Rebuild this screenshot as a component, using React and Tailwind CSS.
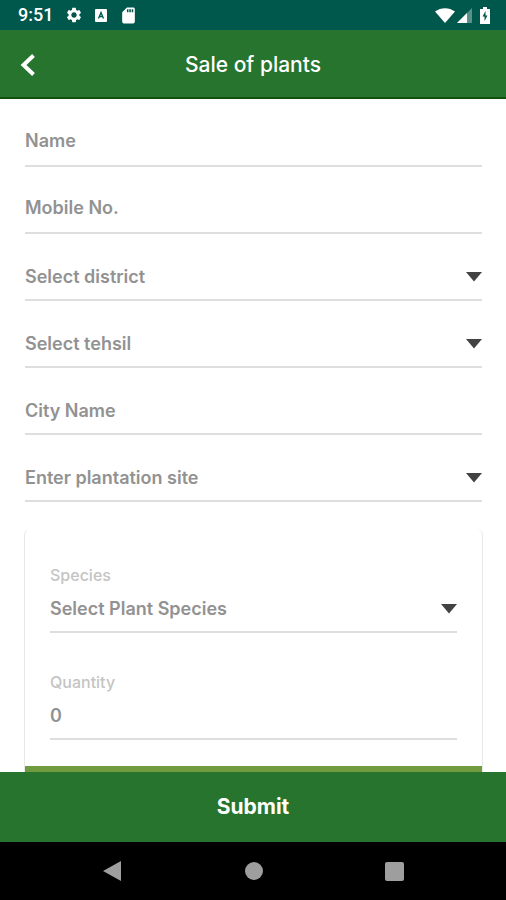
import React from 'react'
import { MdSettings, MdSdStorage } from 'react-icons/md'

const fields = [
  { id: 'name', label: 'Name', type: 'text', pad: 'pb-3' },
  { id: 'mobile', label: 'Mobile No.', type: 'tel', pad: 'pb-3' },
  { id: 'district', label: 'Select district', type: 'select', pad: 'pb-2.5' },
  { id: 'tehsil', label: 'Select tehsil', type: 'select', pad: 'pb-2.5' },
  { id: 'city', label: 'City Name', type: 'text', pad: 'pb-2.5' },
  { id: 'site', label: 'Enter plantation site', type: 'select', pad: 'pb-2.5' },
]

function StatusBar() {
  return (
    <div className="flex h-[30px] shrink-0 items-center justify-between bg-[#00574b] pl-[18px] pr-4 text-white">
      <div className="flex items-center">
        <span className="w-[47px] font-[Roboto,sans-serif] text-[18px] leading-6 font-medium">9:51</span>
        <MdSettings className="h-[18px] w-[18px]" />
        <svg viewBox="0 0 12 13" className="ml-3 h-[13px] w-3">
          <rect width="12" height="13" rx="1" fill="#fff" />
          <path d="M3.5 9.5 6 3.5l2.500 6M4.500 7.500h3" fill="none" stroke="#00574b" strokeWidth="1.300" />
        </svg>
        <MdSdStorage className="ml-3 h-[19px] w-[19px]" />
      </div>
      <div className="flex items-center">
        <svg viewBox="0 0 20 15" className="h-[15px] w-5" fill="#fff">
          <path d="M0 3.500C6-1 14-1 20 3.500L10 15Z" />
        </svg>
        <svg viewBox="0 0 15 15" className="ml-0.5 h-[15px] w-[15px]" fill="#fff">
          <path d="M15 0v15H0Z" opacity=".35" />
          <path d="M10 5v10H0Z" />
        </svg>
        <svg viewBox="0 0 10 17" className="ml-2 h-[17px] w-2.5">
          <path d="M3 0h4v2h3v15H0V2h3Z" fill="#fff" />
          <path d="M5.500 4 2.500 9.500h2V14l3-5.500h-2Z" fill="#00574b" />
        </svg>
      </div>
    </div>
  )
}

function Caret() {
  return (
    <svg viewBox="0 0 16 10" className="pointer-events-none absolute right-0 h-2.5 w-4" fill="#424242">
      <path d="M0 0h16L8 9.500Z" />
    </svg>
  )
}

function Control({ id, label, type }) {
  if (type === 'select') {
    return (
      <div className="relative flex w-full items-center">
        <select
          id={id}
          aria-label={label}
          className="h-6 w-full appearance-none bg-transparent text-[18px] leading-6 font-semibold text-[#929292] outline-none"
        >
          <option>{label}</option>
        </select>
        <Caret />
      </div>
    )
  }
  return (
    <input
      id={id}
      type={type}
      aria-label={label}
      placeholder={label}
      className="h-6 w-full bg-transparent text-[18px] leading-6 font-semibold text-[#929292] outline-none placeholder:text-[#929292]"
    />
  )
}

export default function App() {
  return (
    <div className="flex h-screen flex-col bg-white font-[Inter,sans-serif]">
      <StatusBar />

      <header className="grid h-[69px] shrink-0 grid-cols-[1fr_auto_1fr] items-center border-b-2 border-[#11500f] bg-[#26742d] px-5 pt-0.5 text-white">
        <button aria-label="Back">
          <svg viewBox="0 0 16 22" className="h-[22px] w-4" fill="none" stroke="#fff" strokeWidth="4">
            <path d="M13.500 1.500 3.500 11l10 9.500" />
          </svg>
        </button>
        <h1 className="text-[21px] leading-7 font-medium">Sale of plants</h1>
      </header>

      <form className="flex min-h-0 flex-1 flex-col">
        <main className="min-h-0 flex-1 overflow-hidden pt-px pr-6 pl-[25px]">
          {fields.map((field) => (
            <div key={field.id} className={`flex h-[67px] items-end border-b-2 border-[#dedede] ${field.pad}`}>
              <Control {...field} />
            </div>
          ))}

          <section className="-mx-px mt-[27px] rounded-t-md border-x border-[#e8e8e8]">
            <div className="px-[25px] pt-9 pb-[26px]">
              <div className="border-b-2 border-[#dedede] pb-2.5">
                <label htmlFor="species" className="mb-3 block text-[16px] leading-5 font-medium text-[#c4c4c4]">
                  Species
                </label>
                <Control id="species" label="Select Plant Species" type="select" />
              </div>
              <div className="mt-[39px] border-b-2 border-[#dedede] pb-2.5">
                <label htmlFor="quantity" className="mb-3 block text-[16px] leading-5 font-medium text-[#c4c4c4]">
                  Quantity
                </label>
                <input
                  id="quantity"
                  inputMode="numeric"
                  defaultValue="0"
                  className="block h-6 w-full bg-transparent text-[18px] leading-6 font-semibold text-[#929292] outline-none"
                />
              </div>
            </div>
            <div className="h-14 bg-[#709c3f]" />
          </section>
        </main>

        <button type="submit" className="h-[70px] shrink-0 bg-[#26742d] text-[21px] leading-7 font-bold text-white">
          Submit
        </button>
      </form>

      <nav className="flex h-[58px] shrink-0 items-center justify-between bg-black px-[102px]">
        <button aria-label="System back">
          <svg viewBox="0 0 20 22" className="h-[22px] w-5" fill="#9e9e9e">
            <path d="M19 1v20L1 11Z" />
          </svg>
        </button>
        <button aria-label="Home" className="h-[18px] w-[18px] rounded-full bg-[#9e9e9e]" />
        <button aria-label="Recent apps" className="h-[19px] w-[19px] rounded-xs bg-[#9e9e9e]" />
      </nav>
    </div>
  )
}
